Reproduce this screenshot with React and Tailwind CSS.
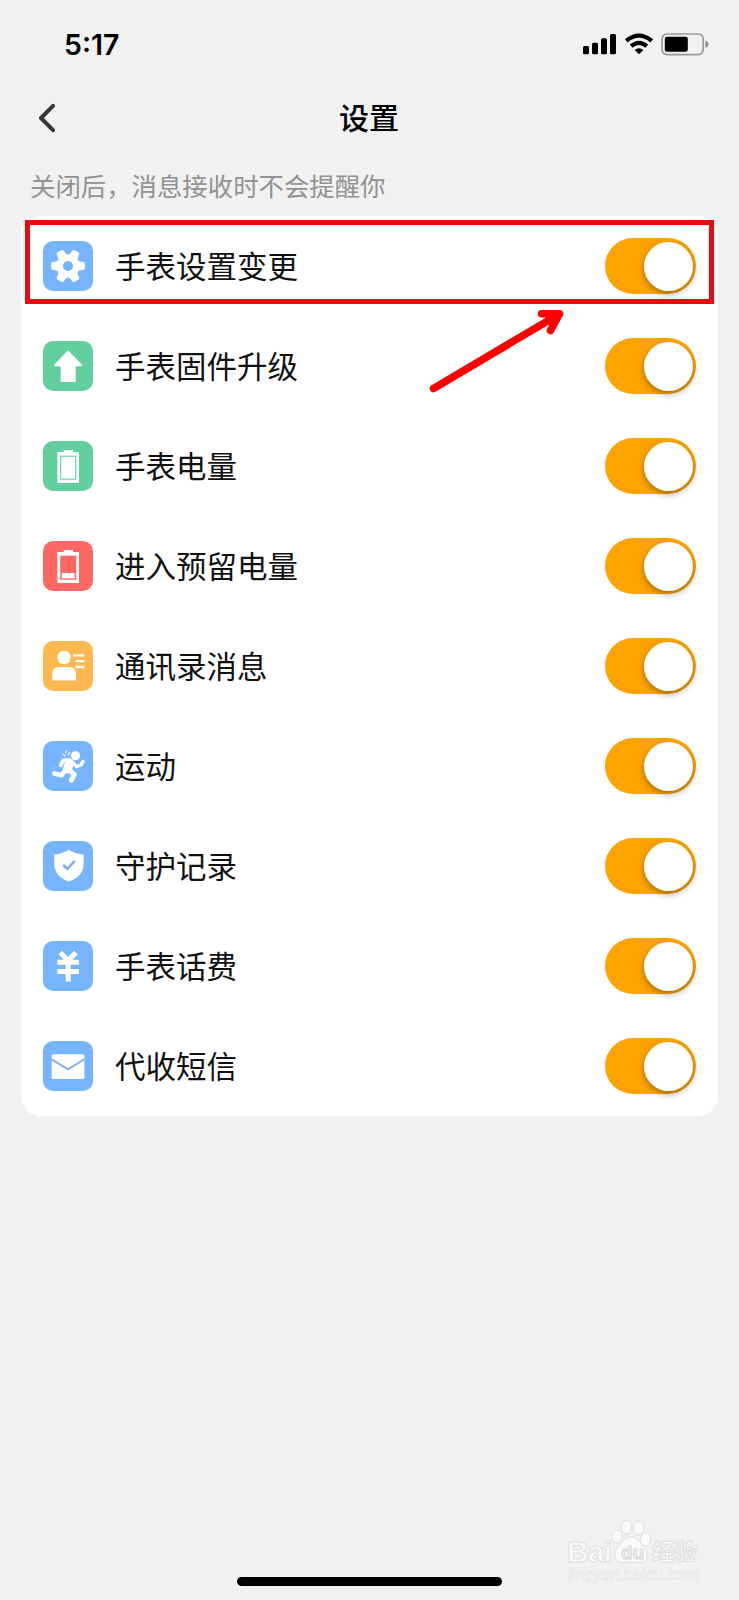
import React, { useState } from "react";

const GearIcon = () => (
  <svg viewBox="0 0 50 50" className="w-full h-full">
    <g transform="translate(25 25)">
      <path
        d="M15 -2 L15 2 Q4.3 2.5 9.23 11.99 L5.77 13.99 Q0 5 -5.77 13.99 L-9.23 11.99 Q-4.3 2.5 -15 2 L-15 -2 Q-4.3 -2.5 -9.23 -11.99 L-5.77 -13.99 Q0 -5 5.77 -13.99 L9.23 -11.99 Q4.3 -2.5 15 -2 Z"
        fill="#fff"
        stroke="#fff"
        strokeWidth="4"
        strokeLinejoin="round"
      />
      <circle r="5" fill="#76b4fd" />
    </g>
  </svg>
);

const UpgradeIcon = () => (
  <svg viewBox="0 0 50 50" className="w-full h-full">
    <path
      d="M25 10.2 L38.6 24.6 L32 24.6 L32 40.2 L18.4 40.2 L18.4 24.6 L11.6 24.6 Z"
      fill="#fff"
      stroke="#fff"
      strokeWidth="1.4"
      strokeLinejoin="round"
    />
  </svg>
);

const BatteryIcon = () => (
  <svg viewBox="0 0 50 50" className="w-full h-full">
    <path d="M20.7 9 H30 V11 H36 V42 H14.4 V11 H20.7 Z" fill="#fff" />
    <rect x="17.7" y="15.2" width="15" height="23" fill="none" stroke="#62cf9b" strokeWidth="1.1" />
  </svg>
);

const LowBatteryIcon = () => (
  <svg viewBox="0 0 50 50" className="w-full h-full">
    <path d="M20.7 9 H30 V11 H36 V42 H14.4 V11 H20.7 Z" fill="#fff" />
    <rect x="17.2" y="14.7" width="16" height="24" fill="#fd6865" />
    <rect x="18.8" y="32" width="12.8" height="5.4" fill="#fff" />
  </svg>
);

const ContactsIcon = () => (
  <svg viewBox="0 0 50 50" className="w-full h-full">
    <circle cx="21" cy="16.5" r="6.8" fill="#fff" />
    <path d="M9.3 39.6 V33 Q9.3 26 16.3 26 H26 Q33 26 33 33 V39.6 Z" fill="#fff" />
    <path d="M30 14.4 H41.3 M32.6 20.2 H41.3 M32.6 26 H41.3" stroke="#fff" strokeWidth="2.3" />
  </svg>
);

const RunIcon = () => (
  <svg viewBox="0 0 50 50" className="w-full h-full">
    <g fill="none" stroke="#fff" strokeLinecap="round" strokeLinejoin="round">
      <circle cx="32.5" cy="14.8" r="4.5" fill="#fff" stroke="none" />
      <path d="M26.3 22 L24.6 28" strokeWidth="9" />
      <path d="M25.6 19 L20 19.4 L17.8 24.4" strokeWidth="3.8" />
      <path d="M29.5 21.5 L33.6 25.6 L38 24 L40 20.4" strokeWidth="3.4" />
      <path d="M25.5 28.6 L31.4 33.4 L28.4 39.4" strokeWidth="4.8" />
      <path d="M22.6 28.5 L18.6 34.2 L11.4 32.4" strokeWidth="4.6" />
      <path d="M20 13.2 L22 14.8 M23.6 9.8 L22.6 11.6 M26.6 11.6 L25 13.8" strokeWidth="1.2" />
    </g>
  </svg>
);

const ShieldIcon = () => (
  <svg viewBox="0 0 50 50" className="w-full h-full">
    <path
      d="M25.8 8.8 Q31.5 13 40.6 13.4 V23.5 Q40.2 35.5 25.8 40.6 Q11.8 35.5 11.3 23.5 V13.4 Q20 13 25.8 8.8 Z"
      fill="#fff"
    />
    <path d="M20.2 24 L24.3 27.8 L31.8 20" fill="none" stroke="#76aeea" strokeWidth="2.4" />
  </svg>
);

const YenIcon = () => (
  <svg viewBox="0 0 50 50" className="w-full h-full">
    <path
      d="M17.2 11.6 L25 19.4 L33 11.6 M14.3 21.2 H36 M14.3 30.4 H36 M25.2 19 V40.5"
      fill="none"
      stroke="#fff"
      strokeWidth="5"
    />
  </svg>
);

const MailIcon = () => (
  <svg viewBox="0 0 50 50" className="w-full h-full">
    <rect x="8.7" y="13.2" width="32.7" height="24.8" rx="1.6" fill="#fff" />
    <path d="M8.6 18.4 L25 28.4 L41.4 18.2" fill="none" stroke="#7fb2ea" strokeWidth="1.9" />
  </svg>
);

const settings = [
  { id: "change", label: "手表设置变更", color: "bg-[#76b4fd]", Icon: GearIcon },
  { id: "firmware", label: "手表固件升级", color: "bg-[#62d09c]", Icon: UpgradeIcon },
  { id: "battery", label: "手表电量", color: "bg-[#62d09c]", Icon: BatteryIcon },
  { id: "reserve", label: "进入预留电量", color: "bg-[#fd6865]", Icon: LowBatteryIcon },
  { id: "contacts", label: "通讯录消息", color: "bg-[#feb850]", Icon: ContactsIcon },
  { id: "sport", label: "运动", color: "bg-[#76b4fd]", Icon: RunIcon },
  { id: "guard", label: "守护记录", color: "bg-[#76b4fd]", Icon: ShieldIcon },
  { id: "fee", label: "手表话费", color: "bg-[#76b4fd]", Icon: YenIcon },
  { id: "sms", label: "代收短信", color: "bg-[#76b4fd]", Icon: MailIcon },
];

const StatusBar = () => (
  <div className="flex items-start justify-between h-[89px] pt-[33px] pl-[64px] pr-[30px]">
    <span className="font-['Inter'] font-semibold text-[28.5px] leading-[24px] text-black">
      5:17
    </span>
    <div className="flex items-start">
      <svg width="34" height="22" viewBox="0 0 34 22">
        <rect x="0" y="13" width="6" height="8.3" rx="1.5" />
        <rect x="9" y="9.8" width="6" height="11.5" rx="1.5" />
        <rect x="18" y="5.2" width="6" height="16.1" rx="1.5" />
        <rect x="27" y="1" width="6" height="20.3" rx="1.5" />
      </svg>
      <svg width="28" height="22" viewBox="0 0 28 22" className="ml-2">
        <g fill="none" stroke="#000" strokeWidth="4.2">
          <path d="M1.2 7.8 Q14 -2.6 26.8 7.8" />
          <path d="M6.2 13.1 Q14 6.6 21.8 13.1" />
        </g>
        <path d="M9.6 16.9 Q14 13.6 18.4 16.9 L14 21.3 Z" />
      </svg>
      <svg width="48" height="23" viewBox="0 0 48 23" className="ml-2">
        <rect x="1" y="1" width="41.2" height="20.6" rx="5" fill="none" stroke="#9a9a9a" strokeWidth="1.7" />
        <rect x="3.8" y="3.8" width="23" height="15" rx="2.2" />
        <path d="M44.4 7.5 Q47.4 8.6 47.4 11.3 Q47.4 14 44.4 15 Z" fill="#8c8c8c" />
      </svg>
    </div>
  </div>
);

const Header = () => (
  <div className="grid grid-cols-3 items-center h-[58px] px-[38px]">
    <button className="w-5 cursor-pointer">
      <svg width="20" height="30" viewBox="0 0 20 30">
        <path
          d="M15 2.8 L3 15 L15 27.2"
          fill="none"
          stroke="#363636"
          strokeWidth="4"
          strokeLinecap="round"
          strokeLinejoin="round"
        />
      </svg>
    </button>
    <h1 className="pb-[3px] -ml-px text-center text-[30px] font-medium text-black">设置</h1>
  </div>
);

const Toggle = ({ on, onClick }) => (
  <button
    role="switch"
    aria-checked={on}
    onClick={onClick}
    className={`flex items-center w-[91px] h-14 rounded-full px-[3px] cursor-pointer ${
      on ? "justify-end bg-[#ffa301]" : "justify-start bg-gray-300"
    }`}
  >
    <span className="w-[49px] h-[49px] rounded-full bg-white shadow-[0_3px_7px_rgba(0,0,0,0.34)]" />
  </button>
);

const SettingRow = ({ item, on, onToggle }) => {
  const { Icon, label, color } = item;
  return (
    <li className="flex items-center h-[100px] pl-[22px] pr-[22px]">
      <div className={`w-[50px] h-[50px] rounded-[10px] ${color}`}>
        <Icon />
      </div>
      <span className="ml-[22px] pb-[2px] flex-1 text-[30.5px] leading-none text-[#111]">{label}</span>
      <Toggle on={on} onClick={onToggle} />
    </li>
  );
};

// Red box and arrow that point out the first row
const Highlight = () => (
  <>
    <div className="absolute left-[25px] top-[220px] w-[689px] h-[84px] border-5 border-[#e90a10] pointer-events-none" />
    <svg
      className="absolute left-[425px] top-[305px] pointer-events-none"
      width="145"
      height="95"
      viewBox="0 0 145 95"
    >
      <path
        d="M8.5 83.5 L134.5 9 M116.5 8.8 L134.5 8.8 L125.5 25.5"
        fill="none"
        stroke="#fe0000"
        strokeWidth="7.6"
        strokeLinecap="round"
        strokeLinejoin="round"
      />
      <path d="M119 8.5 L134.5 8.5 L126 24 Z" fill="#fe0000" />
    </svg>
  </>
);

const Watermark = () => (
  <svg
    className="absolute left-[560px] top-[1515px] pointer-events-none"
    width="150"
    height="75"
    viewBox="0 0 150 75"
  >
    <g fill="#fafafa" stroke="#dedede" strokeWidth="1">
      <text x="7" y="47" fontSize="30" fontWeight="700" textLength="45" fontFamily="Liberation Sans, sans-serif">
        Bai
      </text>
      <ellipse cx="57" cy="21.5" rx="5" ry="6.5" />
      <ellipse cx="66.5" cy="12" rx="5.3" ry="7" />
      <ellipse cx="78.5" cy="13" rx="5.3" ry="7" />
      <ellipse cx="85.5" cy="24.5" rx="5.2" ry="6.5" />
      <path d="M71 22 C77 22 79 27 83 31 C88 36 90 47 80 47.5 C75 48 68 46 62 47.5 C53 48 53 37 58 32 C63 28 65 22 71 22 Z" />
      <text x="92" y="45" fontSize="22.5" fontWeight="700" fontFamily="Noto Sans CJK SC, sans-serif">
        经验
      </text>
    </g>
    <text
      x="61"
      y="44"
      fontSize="19"
      fontWeight="700"
      fill="#f1f1f1"
      stroke="#d6d6d6"
      strokeWidth="0.9"
      fontFamily="Liberation Sans, sans-serif"
    >
      du
    </text>
    <text
      x="8"
      y="64.5"
      fontSize="16"
      textLength="130"
      fill="#fafafa"
      stroke="#e0e0e0"
      strokeWidth="0.5"
      fontFamily="Liberation Sans, sans-serif"
    >
      jingyan.baidu.com
    </text>
  </svg>
);

const App = () => {
  const [enabled, setEnabled] = useState(
    Object.fromEntries(settings.map((item) => [item.id, true]))
  );

  const handleToggle = (id) => {
    setEnabled((prev) => ({ ...prev, [id]: !prev[id] }));
  };

  return (
    <div className="relative flex flex-col w-[739px] h-[1600px] overflow-hidden bg-[#f1f1f1] font-['Noto_Sans_CJK_SC',sans-serif]">
      <StatusBar />
      <Header />

      <p className="h-[69px] pt-[20px] pl-[30px] text-[25.4px] leading-[36px] text-[#929292]">
        关闭后，消息接收时不会提醒你
      </p>

      <ul className="mx-[21px] bg-white rounded-[20px]">
        {settings.map((item) => (
          <SettingRow
            key={item.id}
            item={item}
            on={enabled[item.id]}
            onToggle={() => handleToggle(item.id)}
          />
        ))}
      </ul>

      {/* Home indicator */}
      <div className="mt-auto mb-[14px] mx-auto w-[265px] h-[9px] rounded-full bg-black" />

      <Highlight />
      <Watermark />
    </div>
  );
};

export default App;
